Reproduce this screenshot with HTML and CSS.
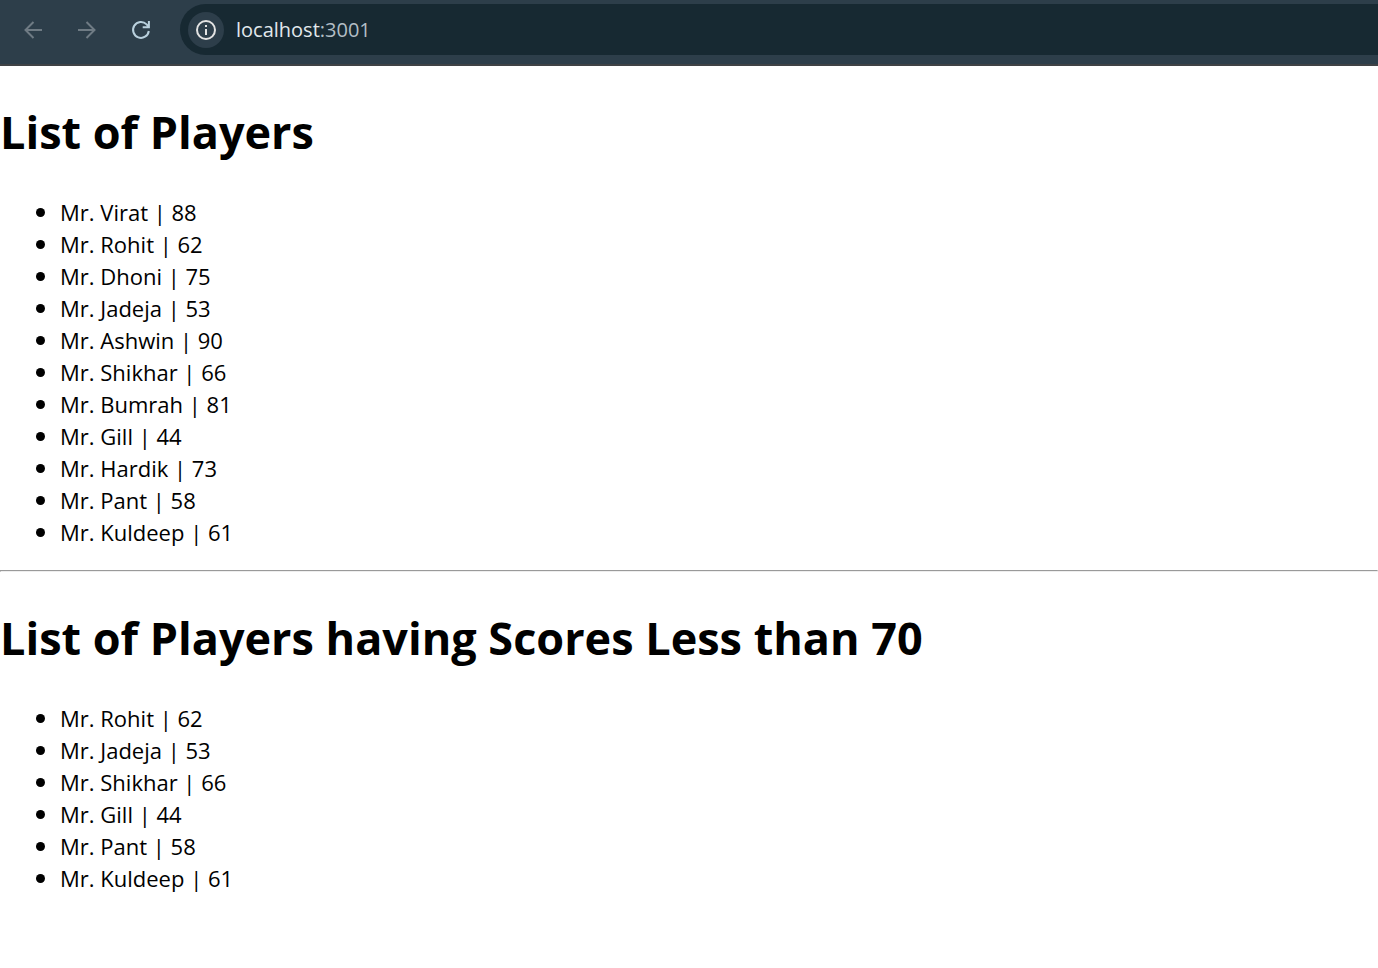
FILE: index.html
```html
<!DOCTYPE html>
<html lang="en">
<head>
<meta charset="utf-8">
<title>localhost:3001</title>
<link rel="stylesheet" href="styles.css">
</head>
<body>
<header class="toolbar">
  <button class="nav-button dim" aria-label="Back">
    <svg width="18" height="18" viewBox="0 0 18 18"><path d="M18 9H1.5M9.5 1L1.5 9l8 8"/></svg>
  </button>
  <button class="nav-button dim" aria-label="Forward">
    <svg width="18" height="18" viewBox="0 0 18 18"><path d="M0 9h16.500M8.500 1l8 8-8 8"/></svg>
  </button>
  <button class="nav-button" aria-label="Reload">
    <svg class="reload" width="18" height="18" viewBox="0 0 18 18"><path d="M16.800 10A7.900 7.900 0 1 1 14.600 3.400l2 2.300M16.900 0v6.300h-6.200"/></svg>
  </button>
  <div class="address">
    <button class="info" aria-label="View site information">
      <svg width="20" height="20" viewBox="0 0 20 20"><circle cx="10" cy="10" r="9"/><path d="M10 9v6M10 5v2"/></svg>
    </button>
    <span class="url">localhost<span class="port">:3001</span></span>
  </div>
</header>
<main>
  <h1>List of Players</h1>
  <ul>
    <li>Mr. Virat | 88</li>
    <li>Mr. Rohit | 62</li>
    <li>Mr. Dhoni | 75</li>
    <li>Mr. Jadeja | 53</li>
    <li>Mr. Ashwin | 90</li>
    <li>Mr. Shikhar | 66</li>
    <li>Mr. Bumrah | 81</li>
    <li>Mr. Gill | 44</li>
    <li>Mr. Hardik | 73</li>
    <li>Mr. Pant | 58</li>
    <li>Mr. Kuldeep | 61</li>
  </ul>
  <hr>
  <h1>List of Players having Scores Less than 70</h1>
  <ul>
    <li>Mr. Rohit | 62</li>
    <li>Mr. Jadeja | 53</li>
    <li>Mr. Shikhar | 66</li>
    <li>Mr. Gill | 44</li>
    <li>Mr. Pant | 58</li>
    <li>Mr. Kuldeep | 61</li>
  </ul>
</main>
</body>
</html>
```

FILE: styles.css
```css
body {
  margin: 0;
  background: #fff;
  color: #000;
  font-family: "Segoe UI", "Open Sans", "Noto Sans", sans-serif;
  font-size: 22px;
  line-height: 32px;
}

.toolbar {
  display: flex;
  align-items: center;
  box-sizing: border-box;
  height: 66px;
  padding: 4px 0 9px 6px;
  background: #2d3e4a;
  border-bottom: 2px solid #3f4245;
}

.nav-button {
  display: flex;
  align-items: center;
  justify-content: center;
  width: 54px;
  height: 51px;
  padding: 0;
  border: 0;
  background: none;
  color: #b9d0dd;
}

.dim {
  color: #6f7b84;
}

svg {
  fill: none;
  stroke: currentColor;
  stroke-width: 2;
}

.reload {
  overflow: visible;
}

.address {
  display: flex;
  flex: 1;
  align-items: center;
  gap: 12px;
  height: 51px;
  margin-left: 12px;
  padding-left: 8px;
  box-sizing: border-box;
  border-radius: 26px 0 0 26px;
  background: #172932;
}

.info {
  display: flex;
  align-items: center;
  justify-content: center;
  width: 36px;
  height: 36px;
  padding: 0;
  border: 0;
  border-radius: 50%;
  background: #2d3e4a;
  color: #e3e3e3;
}

.url {
  color: #e1e8ec;
  font-size: 20px;
}

.port {
  color: #b3bec5;
}

h1 {
  margin: 33px 0 31px;
  font-size: 45px;
  font-weight: 700;
  line-height: 66px;
}

ul {
  margin: 0 0 22px;
  padding-left: 60px;
}

li::marker {
  font-size: 24px;
}

hr {
  margin: 0;
  border: 1px solid;
  border-color: #9a9a9a #eee #eee #9a9a9a;
}
```
